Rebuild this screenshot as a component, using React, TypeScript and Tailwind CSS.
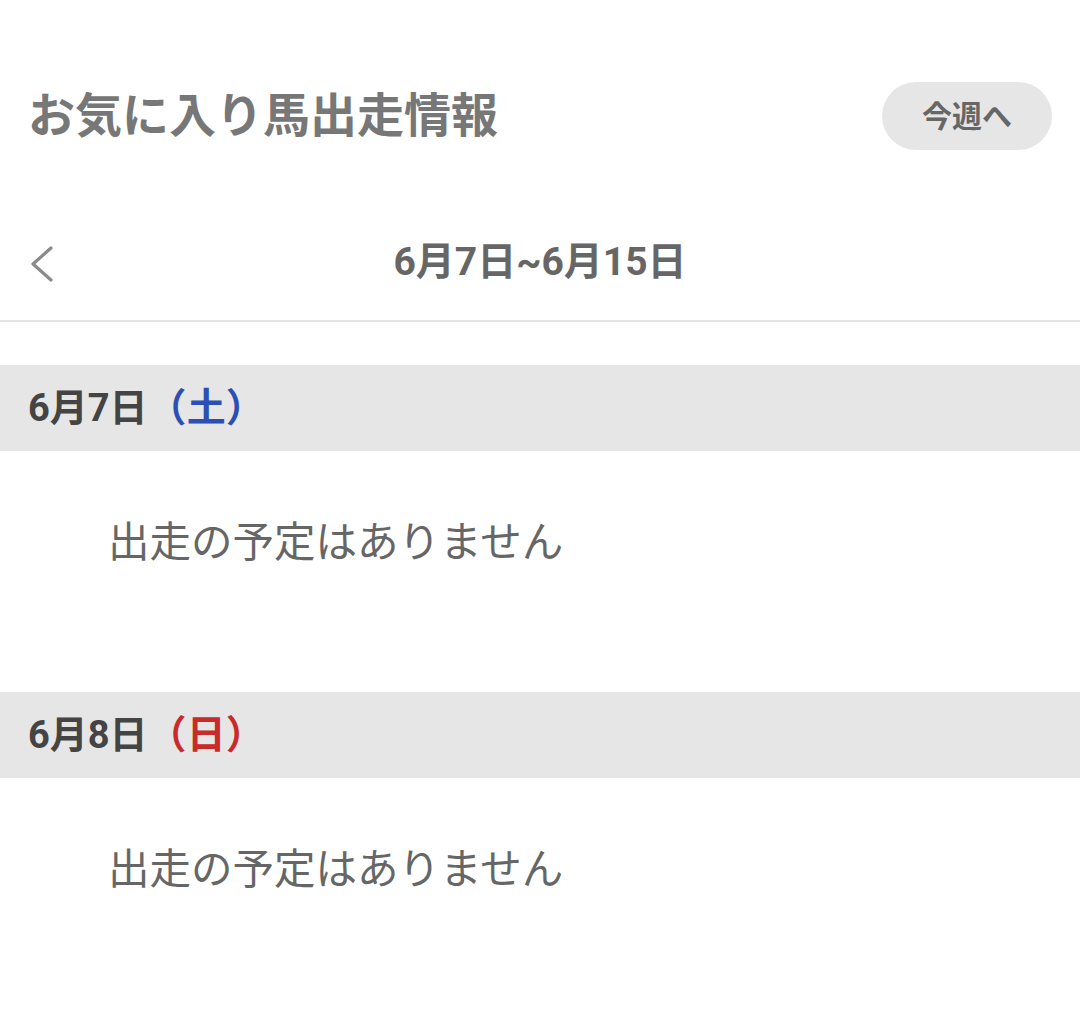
import React from "react";

const font = { fontFamily: 'Roboto, "Noto Sans CJK JP", "Noto Sans", sans-serif' };

function DayBlock({ date, dow, color }: { date: string; dow: string; color: string }) {
  return (
    <div>
      <div className="h-[86px] bg-[#e6e6e6] flex items-center pl-[28px]">
        <span className="text-[38px] font-bold text-[#444444]">{date}</span>
        <span className={`text-[39px] font-bold ${color}`}>（{dow}）</span>
      </div>
      <div className="h-[241px] pt-[61px] pl-[108px]">
        <p className="text-[41.5px] leading-[62px] text-[#666666]">出走の予定はありません</p>
      </div>
    </div>
  );
}

export default function App() {
  return (
    <div className="w-[1080px] h-[1015px] bg-white overflow-hidden" style={font}>
      <div className="pt-[82px] px-[28px] flex items-center justify-between">
        <h1 className="text-[47px] font-bold text-[#777777] leading-[68px]">お気に入り馬出走情報</h1>
        <button className="h-[68px] w-[170px] rounded-full bg-[#e6e6e6] text-[30px] font-bold text-[#666666] flex items-center justify-center">
          今週へ
        </button>
      </div>
      <div className="mt-[68px] h-[90px] relative flex items-center justify-center">
        <svg className="absolute left-[27px] top-[27px]" width="28" height="38" viewBox="0 0 28 38">
          <polyline points="24,3 6,19 24,35" fill="none" stroke="#8a8a8a" strokeWidth="3.2" strokeLinecap="round" strokeLinejoin="round" />
        </svg>
        <span className="text-[39px] font-bold text-[#666666] pb-[2px]">6月7日~6月15日</span>
      </div>
      <div className="h-[2px] bg-[#e3e3e3] mt-[12px]" />
      <div className="mt-[43px]">
        <DayBlock date="6月7日" dow="土" color="text-[#2c4fb5]" />
        <DayBlock date="6月8日" dow="日" color="text-[#c92a2a]" />
      </div>
    </div>
  );
}
